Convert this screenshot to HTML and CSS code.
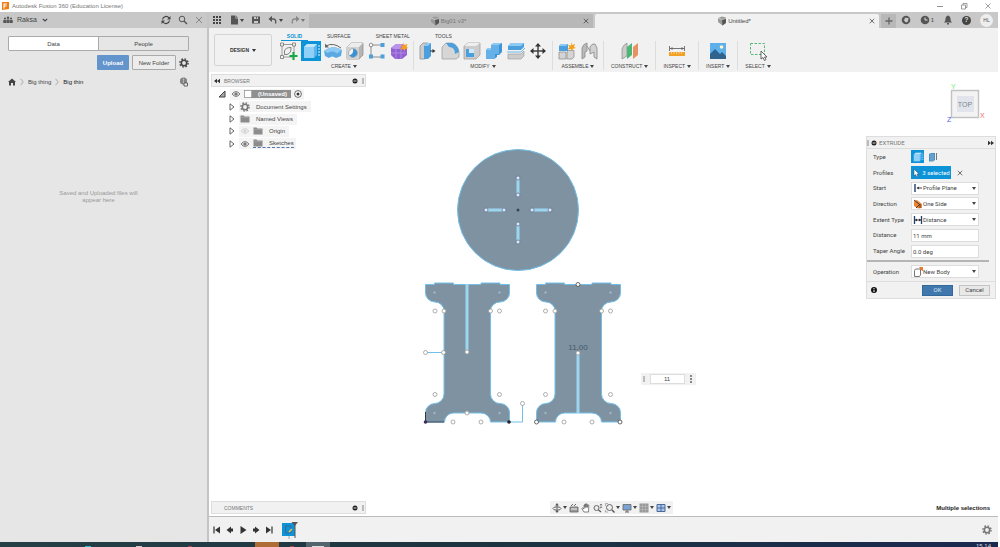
FILE: index.html
```html
<!DOCTYPE html>
<html lang="en">
<head>
<meta charset="utf-8">
<title>Autodesk Fusion 360 (Education License)</title>
<link rel="stylesheet" href="styles.css">
</head>
<body>
<svg class="defs" aria-hidden="true">
  <symbol id="caret" viewBox="0 0 4 3"><path d="M0 0h4L2 3z" fill="currentColor"/></symbol>
  <symbol id="gear" viewBox="0 0 10 10"><g fill="none" stroke="currentColor"><circle cx="5" cy="5" r="2.700" stroke-width="1.600"/><circle cx="5" cy="5" r="4.100" stroke-width="1.400" stroke-dasharray="1.600 1.620"/></g></symbol>
  <symbol id="cross" viewBox="0 0 8 8"><path d="M1 1l6 6M7 1L1 7" stroke="currentColor" fill="none"/></symbol>
  <symbol id="cube" viewBox="0 0 10 10"><path d="M1 2l4-1.500 4 1v5L5.500 9.500 1 6z" fill="#9a9a9a"/><path d="M5 3.500l4-1v4.500L5.500 9.500z" fill="#555"/><path d="M1 2l4 1.500 4-1" fill="none" stroke="#e8e8e8" stroke-width=".6"/></symbol>
  <symbol id="eye" viewBox="0 0 10 8"><path d="M1 4q4-5 8 0q-4 5-8 0z" fill="#ddd" stroke="currentColor" stroke-width=".9"/><circle cx="5" cy="4" r="1.600" fill="currentColor"/></symbol>
  <symbol id="folder" viewBox="0 0 10 8"><path d="M.5.5h3l1 1h5v6h-9z" fill="#8c8c8c"/><path d="M.5 2.500h9" stroke="#aaa" stroke-width=".6"/></symbol>
  <symbol id="twist" viewBox="0 0 6 8"><path d="M1 .8L5 4 1 7.200z" fill="#fff" stroke="#555" stroke-width=".9"/></symbol>
  <symbol id="knob" viewBox="0 0 6 6"><circle cx="3" cy="3" r="2.500" fill="#222"/><path d="M1.500 3h3" stroke="#fff" stroke-width=".8"/></symbol>
  <symbol id="extrude" viewBox="0 0 20 20"><path d="M3 6l3-3h10v11l-3 3H3z" fill="#5fb2ea"/><path d="M3 6l3-3h10l-3 3z" fill="#c4e6fc"/><path d="M3 6h10v11H3z" fill="#8fd0f8"/><path d="M18 4v11" stroke="#e9f7ff" stroke-dasharray="2 1"/></symbol>
</svg>

<header class="titlebar">
  <svg class="i8" viewBox="0 0 8 8"><path d="M1 0h7v7l-7 1z" fill="#ef7d14"/><path d="M3 6.500V2h3M3 4h2.500" stroke="#fff" stroke-width="1.100" fill="none"/></svg>
  <span class="title">Autodesk Fusion 360 (Education License)</span>
  <div class="window-buttons">
    <button aria-label="Minimize"><svg class="i8" viewBox="0 0 8 8"><path d="M1 4.500h6" stroke="#777" stroke-width=".8"/></svg></button>
    <button aria-label="Restore"><svg class="i8" viewBox="0 0 8 8"><path d="M1.500 3h4v4h-4zM3 3V1.500h4v4H5.500" stroke="#777" stroke-width=".7" fill="none"/></svg></button>
    <button aria-label="Close"><svg class="i8" viewBox="0 0 8 8"><path d="M1.500 1.500l5 5M6.500 1.500l-5 5" stroke="#777" stroke-width=".7"/></svg></button>
  </div>
</header>

<div class="app">
  <aside class="data-panel">
    <div class="panel-head">
      <svg class="i10" viewBox="0 0 10 8"><g fill="#555"><circle cx="2" cy="2.500" r="1.100"/><circle cx="5" cy="1.800" r="1.200"/><circle cx="8" cy="2.500" r="1.100"/><path d="M.3 7V4h2.900v3zM3.600 7V3.500h2.800V7zM6.800 7V4h2.900v3z"/></g></svg>
      <button class="team">Raksa <svg class="chev" viewBox="0 0 6 4"><path d="M.8.8L3 3 5.200.8" fill="none" stroke="#444" stroke-width="1.100"/></svg></button>
      <div class="panel-tools">
        <button aria-label="Refresh"><svg class="i10" viewBox="0 0 10 10"><path d="M1.500 4.500A3.600 3.600 0 0 1 8 3M8.500 5.500A3.600 3.600 0 0 1 2 7" fill="none" stroke="#444" stroke-width="1.200"/><path d="M9.500 1v3.500H6zM.5 9V5.500H4z" fill="#444"/></svg></button>
        <button aria-label="Search"><svg class="i10" viewBox="0 0 10 10"><circle cx="4" cy="4" r="2.800" fill="none" stroke="#555"/><path d="M6 6l3 3" stroke="#555" stroke-width="1.400"/></svg></button>
        <button aria-label="Close panel" class="dim"><svg class="i8"><use href="#cross"/></svg></button>
      </div>
    </div>
    <div class="switch"><button class="on">Data</button><button>People</button></div>
    <div class="actions">
      <button class="upload">Upload</button><button class="new-folder">New Folder</button>
      <button aria-label="Settings"><svg class="i10"><use href="#gear"/></svg></button>
    </div>
    <nav class="crumbs">
      <a href="#" aria-label="Home"><svg class="i8" viewBox="0 0 8 8"><path d="M4 .5L0 4h1v3.500h2V5h2v2.500h2V4h1z" fill="#444"/></svg></a>
      <svg class="sep" viewBox="0 0 4 8"><path d="M.5.8L3.300 4 .5 7.200" fill="none" stroke="#aaa"/></svg>
      <a href="#">Big thing</a>
      <svg class="sep" viewBox="0 0 4 8"><path d="M.5.8L3.300 4 .5 7.200" fill="none" stroke="#aaa"/></svg>
      <a href="#" class="here">Big thin</a>
      <button class="web" aria-label="Open on the web"><svg class="i10" viewBox="0 0 10 10"><circle cx="4.500" cy="4" r="3.500" fill="#666"/><path d="M1 4h7M4.500.5v7M2 1.800q2.500 1.400 5 0M2 6.200q2.500-1.400 5 0" stroke="#ddd" stroke-width=".5" fill="none"/><path d="M5 6h3.500v3H5z" fill="#eee" stroke="#444" stroke-width=".8"/></svg></button>
    </nav>
    <p class="empty">Saved and Uploaded files will appear here</p>
  </aside>

  <main class="work">
    <div class="docbar">
      <div class="quick">
        <button aria-label="Data panel"><svg class="i10" viewBox="0 0 10 10"><path d="M1 1h2v2H1zM4 1h2v2H4zM7 1h2v2H7zM1 4h2v2H1zM4 4h2v2H4zM7 4h2v2H7zM1 7h2v2H1zM4 7h2v2H4zM7 7h2v2H7z" fill="#444"/></svg></button>
        <button aria-label="File"><svg class="i10" viewBox="0 0 10 10"><path d="M2 .5h4.500v3H9v6H2z" fill="#555"/><path d="M7 .5L9 3H7z" fill="#777"/></svg><svg class="caret"><use href="#caret"/></svg></button>
        <button aria-label="Save"><svg class="i10" viewBox="0 0 10 10"><path d="M1 1.500h8v7H1z" fill="#555"/><path d="M3 2h4v2H3zM3 6h4v2H3z" fill="#c8c8c8"/><path d="M5 2h1v1.500H5z" fill="#555"/></svg></button>
        <button aria-label="Undo"><svg class="i10" viewBox="0 0 10 10"><path d="M2 4h3.500Q8.500 4.500 7.500 8.500" fill="none" stroke="#555" stroke-width="1.300"/><path d="M4 .8V7L.5 4z" fill="#555"/></svg><svg class="caret"><use href="#caret"/></svg></button>
        <button aria-label="Redo" class="faded"><svg class="i10" viewBox="0 0 10 10"><path d="M8 4H4.500Q1.500 4.500 2.500 8.500" fill="none" stroke="#888" stroke-width="1.300"/><path d="M6 .8V7L9.500 4z" fill="#888"/></svg><svg class="caret"><use href="#caret"/></svg></button>
      </div>
      <div class="doc"><button class="doc-name faded"><svg class="i10"><use href="#cube"/></svg>Big01 v3*</button><button class="doc-close" aria-label="Close Big01"><svg class="i6"><use href="#cross"/></svg></button></div>
      <div class="doc active"><button class="doc-name"><svg class="i10"><use href="#cube"/></svg>Untitled*</button><button class="doc-close" aria-label="Close Untitled"><svg class="i6"><use href="#cross"/></svg></button></div>
      <button class="plus" aria-label="New design"><svg class="i8" viewBox="0 0 8 8"><path d="M4 .5v7M.5 4h7" stroke="#666" stroke-width="1.300"/></svg></button>
      <div class="account">
        <button aria-label="Extensions"><svg class="i10" viewBox="0 0 10 10"><circle cx="5" cy="5" r="4.300" fill="#555"/><path d="M4 2.800L7.500 3 7 6.500 5 7.500 3 5.500z" fill="#c8c8c8"/></svg></button>
        <button aria-label="Jobs"><svg class="i10" viewBox="0 0 10 10"><circle cx="5" cy="5" r="4.300" fill="#555"/><path d="M5 2.500V5h2.500" stroke="#ddd" fill="none"/></svg><b>1</b></button>
        <button aria-label="Notifications"><svg class="i10" viewBox="0 0 10 10"><path d="M5 .5Q7.500 1 7.500 4 7.500 6 9 7.500H1Q2.500 6 2.500 4 2.500 1 5 .5zM4 8h2v1.500H4z" fill="#555"/></svg></button>
        <button aria-label="Help" class="help">?</button>
        <button class="avatar">HL</button>
      </div>
    </div>

    <div class="ribbon">
      <button class="workspace">DESIGN <svg class="caret"><use href="#caret"/></svg></button>
      <div class="tools">
        <nav class="modes"><button class="on">SOLID</button><button>SURFACE</button><button>SHEET METAL</button><button>TOOLS</button></nav>
        <div class="groups">
          <section class="group">
            <div class="icons">
              <button aria-label="Create sketch"><svg class="i20" viewBox="0 0 20 20"><path d="M3 3.500h12M3 3.500V16h10M15 3.500V12" fill="none" stroke="#777" stroke-width=".7"/><path d="M1.500 2h3v3h-3zM13.500 2h3v3h-3zM1.500 14.500h3v3h-3z" fill="#f1f1f1" stroke="#666" stroke-width=".7"/><path d="M5.500 13.500V10Q6 6.500 12 6.500 12.500 12 8 13.500z" fill="none" stroke="#666" stroke-width=".8"/><path d="M14.500 11v8M10.500 15h8" stroke="#18a84a" stroke-width="2.200"/></svg></button>
              <button aria-label="Extrude" class="sel"><svg class="i20"><use href="#extrude"/></svg></button>
              <button aria-label="Revolve"><svg class="i20" viewBox="0 0 20 20"><path d="M1 10Q10 3 19 9l-1 6-5 2q-4-3-7 0l-4-2z" fill="#5ba9e2"/><path d="M1 10Q10 3 19 9q-3 1-4.500 3.500Q9 9 5 12z" fill="#8dcaf4"/><path d="M3 5q7-4 15 2" fill="none" stroke="#666"/><path d="M2 2.500v4h4z" fill="#666"/></svg></button>
              <button aria-label="Hole"><svg class="i20" viewBox="0 0 20 20"><path d="M2 6l4-4h12v12l-4 4H2z" fill="#b5b5b5" stroke="#888" stroke-width=".7"/><path d="M2 6h12v12H2z" fill="#d2d2d2"/><path d="M2 6l4-4h12l-4 4z" fill="#ececec"/><circle cx="8" cy="12" r="4.500" fill="#f2f2f2" stroke="#999" stroke-width=".7"/><path d="M8 7.800a4.200 4.200 0 1 1-3.500 6.500Q9 13 8 7.800z" fill="#3a92d4"/></svg></button>
              <button aria-label="Pattern"><svg class="i20" viewBox="0 0 20 20"><path d="M4 4h12M4 4v12M4 16h12" stroke="#777" stroke-width=".8"/><circle cx="4" cy="4" r="1.800" fill="#fff" stroke="#777" stroke-width=".8"/><path d="M13.500 2h4v4h-4zM2 13.500h4v4H2zM13.500 13.500h4v4h-4z" fill="#4a9fdc"/></svg></button>
              <button aria-label="Create form"><svg class="i20" viewBox="0 0 20 20"><path d="M2 7l5-4h7l4 5v6l-5 4H6l-4-4z" fill="#9160d2"/><path d="M2 7l5-4h7l-3 5H5z" fill="#b994e8"/><path d="M2 12h15M7 8v10M12 7v11" stroke="#b592e6" stroke-width=".8"/><path d="M14.500 1l1 3 3-1-1 3 2 1-3 .8-1 2.200-1.500-2-3 .5 2-2.500-1.500-2 3 .5z" fill="#f5a01d"/></svg></button>
            </div>
            <button class="menu">CREATE <svg class="caret"><use href="#caret"/></svg></button>
          </section>
          <section class="group">
            <div class="icons">
              <button aria-label="Press pull"><svg class="i20" viewBox="0 0 20 20"><path d="M2 5l3-3h5v13l-3 3H2z" fill="#ccc" stroke="#888" stroke-width=".7"/><path d="M6 5l3-3h4v13l-3 3H6z" fill="#4a9fdc"/><path d="M6 5l3-3h4l-3 3z" fill="#8dcaf4"/><path d="M12 10h4" stroke="#333"/><path d="M14.500 8l3 2-3 2z" fill="#333"/></svg></button>
              <button aria-label="Fillet"><svg class="i20" viewBox="0 0 20 20"><path d="M2 6l4-4h6q6 2 7 9v5l-3 2H2z" fill="#d6d6d6" stroke="#999" stroke-width=".7"/><path d="M6 2h6q6 2 7 9l-4 2Q15 6 9 6z" fill="#4a9fdc"/></svg></button>
              <button aria-label="Shell"><svg class="i20" viewBox="0 0 20 20"><path d="M2 5l4-3h12v12l-4 4H2z" fill="#ccc" stroke="#999" stroke-width=".7"/><path d="M2 5l4-3h12l-4 3z" fill="#eee"/><path d="M4 8h8v8H4z" fill="#fff"/><path d="M4 8h3v4h5v4H4z" fill="#4a9fdc"/><path d="M7 8h5v4H7z" fill="#cfe9fa"/></svg></button>
              <button aria-label="Combine"><svg class="i20" viewBox="0 0 20 20"><path d="M7 4l3-2h8v9l-3 3h-2v2l-3 2H2V9l2-2h3z" fill="#3f94d6"/><path d="M7 4l3-2h8l-3 2zM2 9l2-2h4v2z" fill="#8dcaf4"/><path d="M7 4h8v9H11v5H2V9h5z" fill="#65b1e7"/></svg></button>
              <button aria-label="Split"><svg class="i20" viewBox="0 0 20 20"><path d="M2 5l3-3h13v4l-3 3H2z" fill="#4a9fdc"/><path d="M2 5l3-3h13l-3 3z" fill="#8dcaf4"/><path d="M1 11h14l4-4" fill="none" stroke="#6db8ea"/><path d="M2 13h13l3-3v5l-3 3H2z" fill="#ccc" stroke="#999" stroke-width=".6"/></svg></button>
              <button aria-label="Move"><svg class="i20" viewBox="0 0 20 20"><path d="M10 4v12M4 10h12" stroke="#444" stroke-width="1.500"/><path d="M10 2l3 3.500H7zM10 18l3-3.500H7zM2 10l3.500-3v6zM18 10l-3.500-3v6z" fill="#333"/></svg></button>
            </div>
            <button class="menu">MODIFY <svg class="caret"><use href="#caret"/></svg></button>
          </section>
          <section class="group">
            <div class="icons">
              <button aria-label="New component"><svg class="i20" viewBox="0 0 20 20"><path d="M2 5l2-2h7v7H2z" fill="#4a9fdc"/><path d="M2 5l2-2h7L9 5z" fill="#8dcaf4"/><path d="M2 11h7v7H2zM10 11l1.500-1.500H17V16l-2 2h-5z" fill="#d4d4d4" stroke="#888" stroke-width=".7"/><path d="M14 1l1 3 3-1-1 3 2 1-3 .8-1 2.200-1.500-2-3 .5 2-2.500-1.500-2 3 .5z" fill="#f5a01d"/></svg></button>
              <button aria-label="Joint"><svg class="i20" viewBox="0 0 20 20"><path d="M3 7q1-4 5-5v8l-2 1v5l-3 2z" fill="#bbb" stroke="#888" stroke-width=".8"/><path d="M11 6q2-4 5-3l2 4v11l-3-2v-5l-4 2z" fill="#d2d2d2" stroke="#888" stroke-width=".8"/><path d="M8 5l3 5" stroke="#999"/></svg></button>
            </div>
            <button class="menu">ASSEMBLE <svg class="caret"><use href="#caret"/></svg></button>
          </section>
          <section class="group single">
            <div class="icons"><button aria-label="Construct plane"><svg class="i20" viewBox="0 0 20 20"><path d="M2 8q1-4 5-6v13l-5 3z" fill="#ccc" stroke="#888" stroke-width=".7"/><path d="M7 6l5-4v12l-5 4z" fill="#4bb777"/><path d="M13 6l5-4v12l-5 4z" fill="#e79262"/></svg></button></div>
            <button class="menu">CONSTRUCT <svg class="caret"><use href="#caret"/></svg></button>
          </section>
          <section class="group single">
            <div class="icons"><button aria-label="Measure"><svg class="i20" viewBox="0 0 20 20"><path d="M2.500 5v5M17.500 5v5M3 7.500h14" stroke="#666" stroke-width=".9"/><path d="M3 7.500l2.500-1.500v3zM17 7.500L14.500 6v3z" fill="#666"/><path d="M2 11h16v4H2z" fill="#f2a126"/><path d="M4.500 11v2M7 11v2M9.500 11v2M12 11v2M14.500 11v2" stroke="#fbe0ad" stroke-width=".7"/></svg></button></div>
            <button class="menu">INSPECT <svg class="caret"><use href="#caret"/></svg></button>
          </section>
          <section class="group single">
            <div class="icons"><button aria-label="Insert image"><svg class="i20" viewBox="0 0 20 20"><path d="M2 2h16v16H2z" fill="#5eb0ea"/><path d="M2 13l5-5 5 5 2-2 4 4v3H2z" fill="#30648e"/><circle cx="13.500" cy="6" r="1.800" fill="#fff5c8"/></svg></button></div>
            <button class="menu">INSERT <svg class="caret"><use href="#caret"/></svg></button>
          </section>
          <section class="group single">
            <div class="icons"><button aria-label="Select"><svg class="i20" viewBox="0 0 20 20"><path d="M2.500 2.500h14v11h-14z" fill="none" stroke="#52b878" stroke-dasharray="2.500 1.500"/><path d="M13 10v8l2-1.500 1.500 3 1.500-1-1.500-2.500H19z" fill="#fff" stroke="#444" stroke-width=".8"/></svg></button></div>
            <button class="menu">SELECT <svg class="caret"><use href="#caret"/></svg></button>
          </section>
        </div>
      </div>
    </div>

    <div class="canvas">
      <svg class="sketch" viewBox="209 72 789 444" role="img" aria-label="Sketch profiles">
        <defs>
          <path id="leg" d="M425.500 284.500H434.500V283H453.500V284.500H481V283H500V284.500H509.500V293A9.500 9 0 0 1 500 302A9.500 9 0 0 0 490.500 311V394A9.500 9.500 0 0 0 500 403.500A9.500 9 0 0 1 509.500 412.500V422H490.500A9.500 9 0 0 0 481 413H453.500A9 9 0 0 0 444.500 422H425.500V412.500A9.500 9 0 0 1 435 403.500A9.500 9.500 0 0 0 444 394V311A9 9 0 0 0 435 302A9.500 9 0 0 1 425.500 293Z"/>
          <circle id="pt" r="2"/>
        </defs>
        <g class="profile"><circle cx="518" cy="210" r="60.500"/><use href="#leg"/><use href="#leg" x="111"/></g>
        <g class="slot"><path d="M518 178v17M518 225v17M486 210h18M532 210h18"/><path d="M467 284v68M578 353v60"/></g>
        <path class="edge" d="M425.500 352.500h18M509 422h13.500v-18"/>
        <path class="axis" d="M425.500 412v10H444"/>
        <g class="end"><use href="#pt" x="518" y="178"/><use href="#pt" x="518" y="195"/><use href="#pt" x="518" y="224"/><use href="#pt" x="518" y="242"/><use href="#pt" x="486" y="210"/><use href="#pt" x="504" y="210"/><use href="#pt" x="532" y="210"/><use href="#pt" x="550" y="210"/></g>
        <g class="open">
          <use href="#pt" x="435" y="311"/><use href="#pt" x="444" y="311"/><use href="#pt" x="490.500" y="311"/><use href="#pt" x="499.500" y="311"/>
          <use href="#pt" x="425.500" y="352.500"/><use href="#pt" x="443.500" y="352.500"/><use href="#pt" x="467" y="352"/><use href="#pt" x="435" y="394.500"/><use href="#pt" x="499.500" y="394.500"/>
          <use href="#pt" x="467" y="413"/><use href="#pt" x="453" y="422"/><use href="#pt" x="481" y="422"/><use href="#pt" x="522.500" y="403.500"/>
          <use href="#pt" x="545.500" y="311"/><use href="#pt" x="555" y="311"/><use href="#pt" x="601.500" y="311"/><use href="#pt" x="610.500" y="311"/>
          <use href="#pt" x="578" y="353"/><use href="#pt" x="545.500" y="394.500"/><use href="#pt" x="610.500" y="394.500"/><use href="#pt" x="564" y="422"/><use href="#pt" x="592" y="422"/>
        </g>
        <g class="open dark"><use href="#pt" x="578" y="284.500"/><use href="#pt" x="536.500" y="422"/><use href="#pt" x="620" y="422"/></g>
        <g class="faint"><circle cx="434.500" cy="292.500" r="1.200"/><circle cx="499.500" cy="292.500" r="1.200"/><circle cx="434.500" cy="413" r="1.200"/><circle cx="499.500" cy="413" r="1.200"/><circle cx="545.500" cy="292.500" r="1.200"/><circle cx="610.500" cy="292.500" r="1.200"/><circle cx="545.500" cy="413" r="1.200"/><circle cx="610.500" cy="413" r="1.200"/></g>
        <circle cx="518" cy="210" r="1.500" fill="#35485c"/><circle cx="509" cy="422" r="1.800" fill="#222"/><circle cx="425.500" cy="422" r="1.800" fill="#3c2c58"/>
        <text class="dim-text" x="578" y="350" text-anchor="middle">11,00</text>
      </svg>

      <div class="browser">
        <div class="bar"><svg class="i6" viewBox="0 0 6 6"><path d="M3 .8v4.400L0 3zM6 .8v4.400L3 3z" fill="#333"/></svg><span>BROWSER</span><svg class="i6 push"><use href="#knob"/></svg><i class="grip"></i></div>
        <ul class="tree">
          <li class="root"><svg class="i8" viewBox="0 0 8 8"><path d="M7 1v6H1z" fill="#aaa" stroke="#444"/></svg><div class="chip"><svg class="eye"><use href="#eye"/></svg><span class="file"><svg class="i8" viewBox="0 0 8 8"><path d="M.5 1.500l1-1h6v6l-1 1h-6z" fill="#fff" stroke="#999" stroke-width=".6"/></svg><b>(Unsaved)</b></span><svg class="i8" viewBox="0 0 8 8"><circle cx="4" cy="4" r="3.400" fill="#fff" stroke="#444" stroke-width=".8"/><circle cx="4" cy="4" r="1.500" fill="#333"/></svg></div></li>
          <li><svg class="twist"><use href="#twist"/></svg><div class="chip"><svg class="i10 grey"><use href="#gear"/></svg><span>Document Settings</span></div></li>
          <li><svg class="twist"><use href="#twist"/></svg><div class="chip"><svg class="eye"><use href="#folder"/></svg><span>Named Views</span></div></li>
          <li><svg class="twist"><use href="#twist"/></svg><div class="chip"><svg class="eye off"><use href="#eye"/></svg><svg class="eye"><use href="#folder"/></svg><span>Origin</span></div></li>
          <li><svg class="twist"><use href="#twist"/></svg><div class="chip"><svg class="eye"><use href="#eye"/></svg><span class="marked"><svg class="eye"><use href="#folder"/></svg><span>Sketches</span></span></div></li>
        </ul>
      </div>

      <svg class="viewcube" viewBox="0 0 44 44" role="img" aria-label="View cube">
        <path d="M8.500 10.500h27v27h-27z" fill="#f3f3f3" stroke="#c2c2c2" stroke-width="1.400"/><path d="M14 16h17v16H14z" fill="#e1e4ea"/>
        <text x="22" y="27" text-anchor="middle" fill="#80868e">TOP</text><text x="8" y="9" fill="#70ee70">Y</text><text x="4" y="42" fill="#5656f0">Z</text><text x="37" y="38" fill="#f06a6a">X</text>
      </svg>

      <form class="float-input"><i class="grip"></i><input aria-label="Extrude distance" value="11"><button type="button" aria-label="More"><svg class="dots" viewBox="0 0 2 8"><path d="M0 0h2v2H0zM0 3h2v2H0zM0 6h2v2H0z" fill="#888"/></svg></button></form>

      <form class="dialog">
        <div class="dialog-head"><i class="grip"></i><svg class="i6"><use href="#knob"/></svg><span>EXTRUDE</span><svg class="i6 push" viewBox="0 0 6 6"><path d="M0 .8v4.400L3 3zM3 .8v4.400L6 3z" fill="#333"/></svg></div>
        <div class="fields">
          <span>Type</span><div class="types"><button type="button" class="on" aria-label="Extrude"><svg class="i12"><use href="#extrude"/></svg></button><button type="button" aria-label="Thin extrude"><svg class="i10" viewBox="0 0 10 10"><path d="M1 2l2-1h4v7L5 9.500H1z" fill="#4a8fc4"/><path d="M3 2v7M5 2v7" stroke="#9ecdf0" stroke-width=".6"/><path d="M8.500 1v7" stroke="#777"/></svg></button></div>
          <span>Profiles</span><div class="types"><button type="button" class="selected"><svg class="i8" viewBox="0 0 8 8"><path d="M2 0v7l1.500-1.500L5 8l1-.5L5 5h2z" fill="#fff" stroke="#345" stroke-width=".5"/></svg>3 selected</button><button type="button" class="clear" aria-label="Clear"><svg class="i6"><use href="#cross"/></svg></button></div>
          <label for="start">Start</label><div class="pick"><svg class="i10" viewBox="0 0 10 10"><path d="M2 1v8" stroke="#1f3f70" stroke-width="1.400"/><path d="M4 5h5" stroke="#444"/><path d="M3.500 5L6 3.500v3z" fill="#444"/></svg><select id="start"><option>Profile Plane</option></select><svg class="caret"><use href="#caret"/></svg></div>
          <label for="direction">Direction</label><div class="pick"><svg class="i10" viewBox="0 0 10 10"><path d="M1 2l3-1 5 4v4l-4 .5L1 7z" fill="#ee8433"/><path d="M1 1l5 4M3 9l4-4M7 5v4" stroke="#333" stroke-width=".9"/></svg><select id="direction"><option>One Side</option></select><svg class="caret"><use href="#caret"/></svg></div>
          <label for="extent">Extent Type</label><div class="pick"><svg class="i10" viewBox="0 0 10 10"><path d="M1.500 1v8M8.500 1v8" stroke="#1f3f70" stroke-width="1.300"/><path d="M2 5h6" stroke="#333"/><path d="M2 5l2-1.500v3zM8 5L6 3.500v3z" fill="#333"/></svg><select id="extent"><option>Distance</option></select><svg class="caret"><use href="#caret"/></svg></div>
          <label for="distance">Distance</label><input id="distance" value="11 mm">
          <label for="taper">Taper Angle</label><input id="taper" value="0.0 deg">
        </div>
        <hr>
        <div class="fields one"><label for="operation">Operation</label><div class="pick"><svg class="i10" viewBox="0 0 10 10"><path d="M1.500 3.500l1-1.500h5v6l-1 1.500h-5z" fill="#fff" stroke="#777"/><path d="M6 0h4v4L8 3z" fill="#ee7a23"/></svg><select id="operation"><option>New Body</option></select><svg class="caret"><use href="#caret"/></svg></div></div>
        <div class="dialog-foot"><svg class="i6" viewBox="0 0 6 6"><circle cx="3" cy="3" r="3" fill="#111"/><path d="M3 1v1M3 2.700V5" stroke="#fff"/></svg><button type="button" class="ok">OK</button><button type="button" class="cancel">Cancel</button></div>
      </form>

      <div class="bottom">
        <div class="bar"><span class="comments">COMMENTS</span><svg class="i6 push"><use href="#knob"/></svg><i class="grip"></i></div>
        <div class="navbar">
          <button aria-label="Orbit"><svg class="i10" viewBox="0 0 10 10"><path d="M5 1v8" stroke="#666"/><ellipse cx="5" cy="5.500" rx="4" ry="1.600" fill="none" stroke="#666"/><path d="M5 0l1.800 2.500H3.200zM5 10L3.200 7.800h3.600z" fill="#555"/></svg><svg class="caret"><use href="#caret"/></svg></button>
          <button aria-label="Look at"><svg class="i10" viewBox="0 0 10 10"><path d="M1 4h8v5H1z" fill="#999" stroke="#666" stroke-width=".8"/><path d="M2 3l2-2M5 3l2-2" stroke="#666"/><path d="M2 6h6" stroke="#eee"/></svg></button>
          <button aria-label="Pan"><svg class="i10" viewBox="0 0 10 10"><path d="M3 9L.8 5.500l1-.5L3 6V2h1v2.500V1h1v3.500V1h1.200v3.500l.6-2.500h1L7.500 9z" fill="#fff" stroke="#555" stroke-width=".7"/></svg></button>
          <button aria-label="Zoom"><svg class="i10" viewBox="0 0 10 10"><circle cx="3.500" cy="5" r="2.500" fill="#eee" stroke="#666"/><path d="M5.500 7L8 9" stroke="#555" stroke-width="1.200"/><path d="M8 1v4M6.800 2.200L8 1l1.200 1.200M6.800 4L8 5.200 9.200 4" fill="none" stroke="#666" stroke-width=".7"/></svg></button>
          <button aria-label="Fit"><svg class="i10" viewBox="0 0 10 10"><circle cx="4.500" cy="4.500" r="3" fill="#eee" stroke="#666"/><path d="M7 7l2.500 2.500" stroke="#555" stroke-width="1.400"/><path d="M.5 3V.5H3M.5 7v2H3" stroke="#888" stroke-width=".6" fill="none"/></svg><svg class="caret"><use href="#caret"/></svg></button>
          <button aria-label="Display settings"><svg class="i10" viewBox="0 0 10 10"><path d="M1 1.500h8v5.500H1z" fill="#7ba4d6" stroke="#666" stroke-width=".8"/><path d="M3 9h4M5 7v2" stroke="#666"/></svg><svg class="caret"><use href="#caret"/></svg></button>
          <button aria-label="Grid"><svg class="i10" viewBox="0 0 10 10"><path d="M.5.5h9v9h-9z" fill="#999"/><path d="M.5 3.500h9M.5 6.500h9M3.500.5v9M6.500.5v9" stroke="#bbb" stroke-width=".6"/></svg><svg class="caret"><use href="#caret"/></svg></button>
          <button aria-label="Viewports"><svg class="i10" viewBox="0 0 10 10"><path d="M1 1.500h8v7H1z" fill="#a9c6ee" stroke="#4c6a98"/><path d="M5 1.500v7M1 5h8" stroke="#4c6a98"/></svg><svg class="caret"><use href="#caret"/></svg></button>
        </div>
        <strong class="status">Multiple selections</strong>
      </div>
    </div>

    <footer class="timeline">
      <button aria-label="To start"><svg class="i8" viewBox="0 0 8 8"><path d="M1 .5v7" stroke="#333" stroke-width="1.200"/><path d="M7 .5v7L2 4z" fill="#333"/></svg></button>
      <button aria-label="Step back"><svg class="i8" viewBox="0 0 8 8"><path d="M5 .5v7L.5 4zM5 2.500h2v3H5z" fill="#333"/></svg></button>
      <button aria-label="Play"><svg class="i8" viewBox="0 0 8 8"><path d="M1.500 0v8L7.500 4z" fill="#333"/></svg></button>
      <button aria-label="Step forward"><svg class="i8" viewBox="0 0 8 8"><path d="M3 .5v7L7.500 4zM1 2.500h2v3H1z" fill="#333"/></svg></button>
      <button aria-label="To end"><svg class="i8" viewBox="0 0 8 8"><path d="M7 .5v7" stroke="#333" stroke-width="1.200"/><path d="M1 .5v7L6 4z" fill="#333"/></svg></button>
      <button class="feature" aria-label="Sketch feature"><svg class="feature-icon" viewBox="0 0 16 18"><path d="M0 2h13v13H0z" fill="#0c93d8"/><path d="M3.500 5h5q3 4 0 7h-5z" fill="none" stroke="#3a6b8e"/><path d="M7 11l3-3" stroke="#f1c34c" stroke-width="1.500"/><path d="M9.500 1H16l-3.200 4z" fill="#555"/><path d="M13 4v13" stroke="#555"/><path d="M7 15v3" stroke="#aaa"/></svg></button>
      <button class="push grey" aria-label="Timeline settings"><svg class="i10"><use href="#gear"/></svg></button>
    </footer>
  </main>
</div>

<div class="taskbar"><svg class="tray-icons" viewBox="0 0 400 5"><path d="M255 0h24v5h-24z" fill="#b06c35"/><path d="M306 0h24v5h-24z" fill="#53646c"/><path d="M312 4h12v1h-12z" fill="#ddd"/><path d="M85 4h6v1h-6z" fill="#28b8d0"/><path d="M136 4h6v1h-6z" fill="#ccc"/><path d="M188 4h4v1h-4zM290 4h4v1h-4z" fill="#a04848"/></svg><time>15.14</time></div>
</body>
</html>
```
FILE: styles.css
```css
* { box-sizing: border-box; }
body {
  margin: 0;
  height: 100vh;
  overflow: hidden;
  display: flex;
  flex-direction: column;
  background: #fff;
  color: #444;
  font: 6px/8px "Liberation Sans", Arial, sans-serif;
}
button, input, select { font: inherit; color: inherit; margin: 0; }
button { display: flex; align-items: center; justify-content: center; padding: 0; border: 0; background: none; white-space: nowrap; }
svg { display: block; flex: none; }
a { color: inherit; text-decoration: none; }
.defs { position: absolute; width: 0; height: 0; }
.i6 { width: 6px; height: 6px; }
.i8 { width: 8px; height: 8px; }
.i10 { width: 10px; height: 10px; }
.i12 { width: 12px; height: 12px; }
.i20 { width: 20px; height: 20px; }
.caret { width: 4px; height: 3px; }
.push { margin-left: auto; }
.grey { color: #777; }
.dim { color: #888; }
.faded { color: #777; }

.titlebar { flex: none; height: 12px; display: flex; align-items: center; gap: 3px; padding: 0 8px 0 1px; }
.title { color: #777; }
.window-buttons { margin-left: auto; display: flex; gap: 16px; }

.app { flex: 1; min-height: 0; display: flex; margin-right: 2px; }
.data-panel { flex: none; width: 209px; background: #e6e6e6; border-right: 2px solid #c4c4c4; }
.panel-head { height: 16px; display: flex; align-items: center; gap: 4px; padding: 0 4px 0 3px; background: #c8c8c8; }
.team { gap: 5px; font-size: 7px; }
.chev { width: 6px; height: 4px; }
.panel-tools { margin-left: auto; display: flex; align-items: center; gap: 7px; }
.switch { display: flex; height: 15px; margin: 8px 18px 0 8px; border: 1px solid #aaa; border-radius: 1px; }
.switch button { flex: 1; }
.switch .on { background: #fff; border-right: 1px solid #aaa; }
.actions { display: flex; justify-content: flex-end; align-items: center; gap: 3px; margin: 4px 18px 0 8px; }
.actions button { height: 15px; }
.actions .upload { width: 32px; background: #6394cc; color: #fff; font-weight: bold; border-radius: 1px; }
.actions .new-folder { width: 44px; border: 1px solid #aaa; border-radius: 1px; background: #ececec; }
.crumbs { display: flex; align-items: center; gap: 4px; margin: 7px 18px 0 8px; height: 10px; }
.sep { width: 4px; height: 8px; }
.here { color: #222; }
.web { margin-left: auto; }
.empty { margin: 103px 28px 0 18px; padding: 0 36px; text-align: center; line-height: 7px; color: #999; }

.work { flex: 1; min-width: 0; display: flex; flex-direction: column; }
.docbar { flex: none; height: 16px; display: flex; align-items: stretch; padding-top: 2px; background: #c8c8c8; }
.quick { display: flex; align-items: center; justify-content: space-between; width: 100px; padding: 0 4px 2px 3px; }
.quick button { gap: 1px; }
.doc { flex: 1; display: flex; align-items: center; background: #b8b8b8; padding: 0 4px; margin-right: 2px; }
.doc.active { background: #f1f1f1; border-radius: 2px 2px 0 0; }
.doc-name { flex: 1; gap: 1px; }
.plus { width: 15px; background: #b8b8b8; }
.account { flex: none; width: 102px; display: flex; align-items: center; justify-content: space-between; padding: 0 5px 2px; color: #555; }
.account b { font-size: 5px; margin-left: 1px; }
.help { width: 9px; height: 9px; border-radius: 50%; background: #444; color: #ddd; font-weight: bold; font-size: 7px; }
.avatar { width: 13px; height: 13px; border-radius: 50%; background: #eee; font-size: 5px; }

.ribbon { flex: none; height: 44px; display: flex; background: #f1f1f1; padding-left: 5px; font-size: 5px; }
.workspace { width: 58px; height: 32px; margin: 6px 7px 0 0; gap: 3px; border: 1px solid #d4d4d4; border-radius: 2px; font-weight: bold; color: #333; }
.tools { padding-top: 3px; }
.modes { display: flex; gap: 25px; height: 10px; padding-left: 2px; }
.modes button { height: 10px; }
.modes .on { width: 27px; margin-right: -6px; color: #0a93d6; font-weight: bold; border-bottom: 1px solid #0a93d6; }
.groups { display: flex; }
.group { display: flex; flex-direction: column; align-items: center; gap: 1px; padding: 0 4px; border-right: 1px solid #ddd; margin-bottom: 1px; }
.group:first-child { padding-left: 0; }
.group.single { padding: 0 7px; }
.group:last-child { border: 0; }
.icons { display: flex; gap: 2px; }
.icons .sel { background: #0c93d8; }
.menu { gap: 2px; height: 8px; }

.canvas { flex: 1; min-height: 0; position: relative; background: #fff; }
.sketch { width: 100%; height: 100%; }
.profile { fill: #7f92a1; stroke: #72c0e9; }
.slot { stroke: #9bd5ef; stroke-width: 3; }
.edge { fill: none; stroke: #72c0e9; }
.axis { fill: none; stroke: #333a4a; }
.end { fill: #e2e8f4; stroke: #5f7799; stroke-width: .8; }
.open { fill: #fff; stroke: #999; stroke-width: .8; }
.open.dark { stroke: #444; }
.faint { fill: #9fb4c4; }
.dim-text { font-size: 8px; fill: #46586a; }

.browser { position: absolute; left: 2px; top: 2px; width: 155px; }
.bar { display: flex; align-items: center; gap: 4px; width: 155px; height: 13px; padding: 0 1px 0 2px; background: #f1f1f1; border: 1px solid #ddd; font-size: 5px; color: #777; }
.comments { padding-left: 10px; }
.grip { width: 2px; height: 6px; border: solid #bbb; border-width: 0 1px; }
.tree { list-style: none; margin: 1px 0 0; padding: 0 0 0 18px; height: 62px; display: flex; flex-direction: column; }
.tree li { flex: 1; display: flex; align-items: center; gap: 4px; }
.tree .root { margin-left: -11px; }
.chip { display: flex; align-items: center; gap: 3px; height: 11px; padding: 0 2px 0 1px; background: #f4f4f4; }
.chip > span { padding: 0 2px 0 3px; }
.chip .file { display: flex; align-items: center; gap: 6px; height: 8px; padding: 0 4px 0 0; background: #8f8f8f; color: #fff; }
.twist { width: 6px; height: 8px; }
.eye { width: 10px; height: 8px; color: #777; }
.off { opacity: .25; }
.chip .marked { display: flex; gap: 6px; padding: 0; border-bottom: 1px dashed #5575b0; }

.viewcube { position: absolute; right: 11px; top: 8px; width: 44px; height: 44px; font-size: 7px; }
.float-input { position: absolute; left: calc(50% + 37px); top: calc(50% + 79px); display: flex; align-items: center; gap: 5px; padding: 0 4px 0 2px; height: 12px; background: #f1f1f1; }
.float-input input { width: 35px; height: 10px; border: 1px solid #ddd; padding: 0; text-align: center; background: #fff; }
.dots { width: 2px; height: 8px; }

.dialog { position: absolute; right: 2px; top: 64px; width: 130px; background: #f1f1f1; border: 1px solid #ddd; font-family: Roboto, "Liberation Sans", sans-serif; }
.dialog-head { display: flex; align-items: center; gap: 2px; height: 12px; padding-right: 1px; border-bottom: 1px solid #ddd; color: #777; }
.fields { display: grid; grid-template-columns: 38px 68px; grid-template-rows: repeat(7, 1fr); align-items: center; height: 110px; padding-left: 6px; }
.fields.one { grid-template-rows: 1fr; height: 17px; }
.types { display: flex; align-items: center; gap: 2px; }
.types button { height: 13px; width: 13px; }
.types .on { background: #0c93d8; }
.types .selected { width: 40px; gap: 2px; background: #0c93d8; color: #fff; }
.pick, .fields input { display: flex; align-items: center; width: 68px; height: 13px; border: 1px solid #ddd; background: #fff; padding: 0 2px 0 1px; }
.pick select { flex: 1; min-width: 0; appearance: none; border: 0; background: none; padding: 0; height: 10px; }
.dialog hr { height: 2px; margin: 1px 6px 1px 0; border: 0; background: #b5b5b5; }
.dialog-foot { display: flex; align-items: center; gap: 6px; height: 17px; margin-top: 1px; padding: 0 5px 0 4px; border-top: 1px solid #ddd; }
.dialog-foot button { width: 31px; height: 11px; border: 1px solid #c4c4c4; }
.dialog-foot .ok { margin-left: auto; background: #4078ae; border-color: #35689a; color: #dce9f6; }
.dialog-foot .cancel { background: #e8e8e8; }

.bottom { position: absolute; left: 2px; right: 8px; bottom: 2px; display: grid; grid-template-columns: 1fr auto 1fr; align-items: center; }
.navbar { display: flex; align-items: center; justify-content: space-between; width: 123px; height: 13px; margin-left: 22px; padding: 0 2px; background: #f1f1f1; }
.navbar button { gap: 1px; }
.status { justify-self: end; color: #222; }

.timeline { flex: none; height: 26px; display: flex; align-items: center; gap: 5px; padding: 0 6px 0 4px; background: #f1f1f1; border-top: 1px solid #bbb; }
.feature { margin-left: 4px; }
.feature-icon { width: 16px; height: 18px; }
.taskbar { flex: none; display: flex; justify-content: space-between; height: 5px; margin-right: 2px; padding-right: 7px; overflow: hidden; background: linear-gradient(90deg, #263f46, #1d3440 50%, #1b2850); color: #ddd; }
.tray-icons { width: 400px; height: 5px; }
```
